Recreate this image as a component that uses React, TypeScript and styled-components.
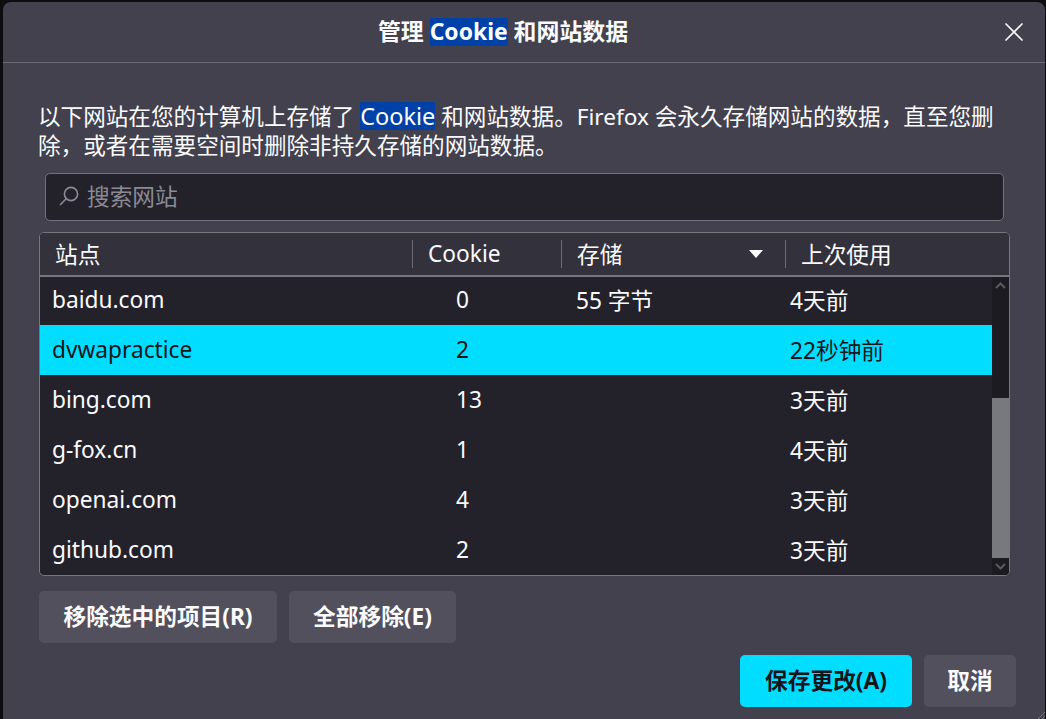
import { createGlobalStyle } from 'styled-components';
import styled from 'styled-components';

const GlobalStyle = createGlobalStyle`
  html, body {
    margin: 0;
    height: 100%;
    background: #0e0e11;
    overflow: hidden;
  }
  body {
    font-family: 'Noto Sans', 'Noto Sans CJK SC', sans-serif;
    color: #fbfbfe;
  }
`;

const Page = styled.div`
  height: 719px;
  padding: 2px 1px 0 3px;
  box-sizing: border-box;
`;

const Dialog = styled.div`
  position: relative;
  height: 717px;
  background: #42414d;
  border-radius: 8px 8px 0 0;
  display: flex;
  flex-direction: column;
`;

const Header = styled.header`
  height: 61px;
  flex: none;
  border-bottom: 1px solid #6b6a75;
  display: flex;
  align-items: center;
  justify-content: center;
  position: relative;
  box-sizing: border-box;
  padding-bottom: 1px;
`;

const Title = styled.h1`
  margin: 0 42px 0 0;
  font-size: 22.9px;
  font-weight: 700;
  line-height: 30px;
`;

const Mark = styled.mark`
  display: inline-block;
  line-height: 28px;
  background: #0041a8;
  color: #fff;
`;

const IntroMark = styled(Mark)`
  font-size: 23.5px;
`;

const Close = styled.button`
  position: absolute;
  right: 20px;
  top: 19px;
  width: 22px;
  height: 22px;
  padding: 0;
  border: 0;
  background: transparent;
  color: #fbfbfe;
  display: flex;
`;

const Body = styled.div`
  padding: 39px 36px 0;
  flex: 1;
  display: flex;
  flex-direction: column;
`;

const Intro = styled.p`
  margin: 0 0 0 -1px;
  font-size: 22.6px;
  line-height: 29px;
  height: 58px;
  white-space: nowrap;
`;

const SearchBox = styled.label`
  margin: 13px 6px 0;
  height: 48px;
  box-sizing: border-box;
  width: 959px;
  background: #23222b;
  border: 1px solid #72717c;
  border-radius: 5px;
  display: flex;
  align-items: center;
  padding: 0 0 3px 13px;
  gap: 8px;
  color: #8a8a94;
  font-size: 22.7px;
`;

const Table = styled.div`
  margin-top: 11px;
  width: 971px;
  height: 344px;
  box-sizing: border-box;
  border: 1px solid #77767f;
  border-radius: 5px;
  overflow: hidden;
  background: #23222b;
  display: flex;
  flex-direction: column;
`;

const HeadRow = styled.div`
  height: 44px;
  flex: none;
  box-sizing: border-box;
  background: #33323c;
  border-bottom: 2px solid #77767f;
  display: grid;
  grid-template-columns: 372px 149px 224px 1fr;
  align-items: start;
  font-size: 22.7px;
`;

const HeadCell = styled.div`
  display: flex;
  align-items: center;
  justify-content: space-between;
  box-sizing: border-box;
  padding: 0 22px 2px 15px;
  margin-top: 7px;
  height: 28px;
  &:not(:first-child) {
    border-left: 1px solid #6b6a75;
  }
`;

const SortArrow = styled.svg`
  margin-top: 2px;
`;

const Rows = styled.div`
  flex: 1;
  display: flex;
  min-height: 0;
`;

const RowList = styled.div`
  flex: 1;
  min-width: 0;
  overflow: hidden;
  display: flex;
  flex-direction: column;
  justify-content: flex-end;
`;

const Row = styled.div<{ $selected?: boolean }>`
  height: 50px;
  flex: none;
  box-sizing: border-box;
  display: grid;
  grid-template-columns: 404px 120px 214px 1fr;
  align-items: center;
  padding: 0 0 2px 12px;
  font-size: 22.7px;
  background: ${(p) => (p.$selected ? '#00ddff' : 'transparent')};
  color: ${(p) => (p.$selected ? '#15141a' : '#fbfbfe')};
`;

const Scrollbar = styled.div`
  width: 17px;
  flex: none;
  background: #1c1b22;
  display: flex;
  flex-direction: column;
`;

const ScrollArrow = styled.div`
  height: 17px;
  flex: none;
  display: flex;
  align-items: center;
  justify-content: center;
  color: #5a5963;
`;

const ScrollTrack = styled.div`
  flex: 1;
  padding-top: 104px;
  display: flex;
`;

const ScrollThumb = styled.div`
  flex: 1;
  background: #78787f;
`;

const ActionRow = styled.div`
  margin-top: 15px;
  display: flex;
  gap: 12px;
`;

const FooterRow = styled.div`
  margin: 12px -7px 0 0;
  display: flex;
  justify-content: flex-end;
  gap: 12px;
`;

const Button = styled.button<{ $primary?: boolean; $w: number }>`
  width: ${(p) => p.$w}px;
  height: 52px;
  border: 0;
  border-radius: 5px;
  padding: 0 0 3px;
  font-family: inherit;
  font-size: 22.7px;
  font-weight: 700;
  background: ${(p) => (p.$primary ? '#00ddff' : '#52505c')};
  color: ${(p) => (p.$primary ? '#15141a' : '#fbfbfe')};
`;

const Grip = styled.svg`
  position: absolute;
  right: 0;
  bottom: 0;
`;

const rows = [
  { site: 'baidu.com', cookies: '0', storage: '55 字节', used: '4天前' },
  { site: 'dvwapractice', cookies: '2', storage: '', used: '22秒钟前', selected: true },
  { site: 'bing.com', cookies: '13', storage: '', used: '3天前' },
  { site: 'g-fox.cn', cookies: '1', storage: '', used: '4天前' },
  { site: 'openai.com', cookies: '4', storage: '', used: '3天前' },
  { site: 'github.com', cookies: '2', storage: '', used: '3天前' },
];

export default function App() {
  return (
    <Page>
      <GlobalStyle />
      <Dialog>
        <Header>
          <Title>
            管理 <Mark>Cookie</Mark> 和网站数据
          </Title>
          <Close aria-label="关闭">
            <svg width="22" height="22" viewBox="0 0 22 22" fill="none" stroke="currentColor" strokeWidth="1.6">
              <path d="M2.5 2.5l17 17M19.5 2.5l-17 17" />
            </svg>
          </Close>
        </Header>
        <Body>
          <Intro>
            以下网站在您的计算机上存储了 <IntroMark>Cookie</IntroMark> 和网站数据。Firefox 会永久存储网站的数据，直至您删
            <br />
            除，或者在需要空间时删除非持久存储的网站数据。
          </Intro>
          <SearchBox>
            <svg width="20" height="20" viewBox="0 0 20 20" fill="none" stroke="#8a8a94" strokeWidth="1.6">
              <circle cx="12" cy="8" r="6.6" />
              <path d="M7.2 12.8L1 19" />
            </svg>
            搜索网站
          </SearchBox>
          <Table>
            <HeadRow>
              <HeadCell>站点</HeadCell>
              <HeadCell>Cookie</HeadCell>
              <HeadCell>
                存储
                <SortArrow width="14" height="8" viewBox="0 0 14 8" fill="#fbfbfe">
                  <path d="M0 0h14L7 8z" />
                </SortArrow>
              </HeadCell>
              <HeadCell>上次使用</HeadCell>
            </HeadRow>
            <Rows>
              <RowList>
                {rows.map((r) => (
                  <Row key={r.site} $selected={r.selected}>
                    <span>{r.site}</span>
                    <span>{r.cookies}</span>
                    <span>{r.storage}</span>
                    <span>{r.used}</span>
                  </Row>
                ))}
              </RowList>
              <Scrollbar>
                <ScrollArrow>
                  <svg width="11" height="7" viewBox="0 0 11 7" fill="none" stroke="currentColor" strokeWidth="2">
                    <path d="M1 6l4.5-4.5L10 6" />
                  </svg>
                </ScrollArrow>
                <ScrollTrack>
                  <ScrollThumb />
                </ScrollTrack>
                <ScrollArrow>
                  <svg width="11" height="7" viewBox="0 0 11 7" fill="none" stroke="currentColor" strokeWidth="2">
                    <path d="M1 1l4.5 4.5L10 1" />
                  </svg>
                </ScrollArrow>
              </Scrollbar>
            </Rows>
          </Table>
          <ActionRow>
            <Button $w={238}>移除选中的项目(R)</Button>
            <Button $w={167}>全部移除(E)</Button>
          </ActionRow>
          <FooterRow>
            <Button $primary $w={172}>保存更改(A)</Button>
            <Button $w={92}>取消</Button>
          </FooterRow>
        </Body>
        <Grip width="7" height="7" viewBox="0 0 7 7" stroke="#77767f" strokeWidth="1">
          <path d="M0 7L7 0M4 7l3-3" />
        </Grip>
      </Dialog>
    </Page>
  );
}
